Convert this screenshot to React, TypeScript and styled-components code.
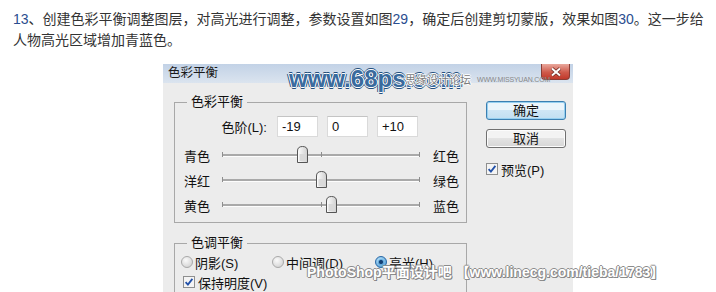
import React from "react";
import styled, { createGlobalStyle } from "styled-components";

const GlobalStyle = createGlobalStyle`
  html, body {
    margin: 0;
    padding: 0;
    background: #fff;
    overflow: hidden;
  }
`;

const Page = styled.div`
  position: relative;
  width: 716px;
  height: 292px;
  overflow: hidden;
  font-family: "Liberation Sans", "Noto Sans CJK SC", sans-serif;
`;

const Article = styled.p`
  margin: 0;
  padding: 9px 0 0 13px;
  font-size: 14px;
  line-height: 21px;
  color: #333;
`;

const Num = styled.span`
  color: #2a4d8f;
`;

const Dialog = styled.div`
  margin: 13px 0 0 163px;
  width: 410px;
  height: 240px;
  background: #ececec;
  display: flex;
  flex-direction: column;
  font-size: 13px;
  color: #111;
`;

const TitleBar = styled.div`
  height: 19px;
  display: flex;
  align-items: center;
  justify-content: space-between;
  background: linear-gradient(#c2d2e6, #dbe4ef);
`;

const Title = styled.span`
  padding-left: 5px;
  font-size: 12.5px;
  line-height: 15px;
  color: #1a1a1a;
`;

const CloseButton = styled.div`
  align-self: flex-start;
  width: 27px;
  height: 15px;
  margin-right: 3px;
  border: 1px solid #8a3d35;
  border-top: 0;
  border-radius: 0 0 4px 4px;
  background: linear-gradient(#e9a89d, #cf5a4b 55%, #c0392b);
  display: flex;
  align-items: center;
  justify-content: center;
`;

const Body = styled.div`
  flex: 1;
  display: flex;
  padding-left: 11px;
`;

const LeftColumn = styled.div`
  width: 293px;
  display: flex;
  flex-direction: column;
`;

const Group = styled.fieldset<{ $top: number }>`
  margin: ${({ $top }) => $top}px 0 0;
  padding: 0 0 4px;
  border: 1px solid #a8a8a8;
  min-inline-size: 0;
`;

const Legend = styled.legend`
  margin-left: 12px;
  padding: 0 4px;
  font-size: 13px;
  line-height: 16px;
`;

const LevelsRow = styled.div`
  display: flex;
  align-items: center;
  margin-top: 6px;
  height: 21px;
`;

const LevelsLabel = styled.span`
  width: 92px;
  margin-right: 10px;
  text-align: right;
`;

const LevelInputs = styled.div`
  display: flex;
  gap: 9px;
`;

const LevelInput = styled.div`
  box-sizing: border-box;
  width: 41px;
  height: 21px;
  padding-left: 4px;
  background: #fff;
  border: 1px solid #dadada;
  border-top-color: #c4c4c4;
  line-height: 19px;
`;

const Sliders = styled.div`
  margin-top: 6px;
`;

const SliderRow = styled.div`
  height: 25px;
  display: flex;
  align-items: center;
  padding-left: 9px;
`;

const SliderLabel = styled.span`
  width: 38px;
`;

const Track = styled.div`
  position: relative;
  width: 198px;
  height: 2px;
  background: #a9a9a9;
  border-bottom: 1px solid #fdfdfd;
  margin-right: 13px;
`;

const TrackTick = styled.span<{ $at: string }>`
  position: absolute;
  left: ${({ $at }) => $at};
  top: -2px;
  width: 1px;
  height: 5px;
  background: #8e8e8e;
`;

const Thumb = styled.svg`
  position: absolute;
  top: -8px;
  width: 11px;
  height: 17px;
  margin-left: -5px;
`;

const RadioRow = styled.div`
  margin-top: 1px;
  height: 20px;
  display: grid;
  grid-template-columns: 91px 103px auto;
  align-items: center;
  padding-left: 6px;
`;

const Option = styled.label`
  display: flex;
  align-items: center;
  gap: 2px;
`;

const CheckRow = styled.div<{ $pad: number; $top: number }>`
  height: 20px;
  display: flex;
  align-items: center;
  gap: 3px;
  padding-left: ${({ $pad }) => $pad}px;
  margin-top: ${({ $top }) => $top}px;
`;

const RightColumn = styled.div`
  margin-left: 19px;
  padding-top: 18px;
  display: flex;
  flex-direction: column;
`;

const DialogButton = styled.div<{ $primary?: boolean }>`
  box-sizing: border-box;
  width: 80px;
  height: 19px;
  margin-bottom: 9px;
  border: 1px solid ${({ $primary }) => ($primary ? "#3c7fb1" : "#707070")};
  border-radius: 3px;
  background: ${({ $primary }) =>
    $primary ? "linear-gradient(#ecf5fb 45%, #cfe6f5 50%, #c2dff2)" : "linear-gradient(#f3f3f3 45%, #e3e3e3 50%, #d6d6d6)"};
  box-shadow: inset 0 0 0 1px ${({ $primary }) => ($primary ? "#97d0f0" : "#fcfcfc")};
  text-align: center;
  line-height: 17px;
`;

const Mark = styled.div`
  position: absolute;
  white-space: nowrap;
  pointer-events: none;
`;

const SiteMark = styled(Mark)`
  left: 289px;
  top: 67px;
  font-family: "Liberation Sans", sans-serif;
  font-weight: bold;
  font-size: 24px;
  line-height: 24px;
  color: #3a6b9e;
  text-shadow: 1px 0 #fff, -1px 0 #fff, 0 1px #fff, 0 -1px #fff, 2px 0 #254f7c, -2px 0 #254f7c,
    0 2px #254f7c, 0 -2px #254f7c;
`;

const ForumMark = styled(Mark)`
  left: 405px;
  top: 73px;
  font-size: 11px;
  line-height: 14px;
  color: #7a7a7a;
  text-shadow: 1px 0 #fff, -1px 0 #fff, 0 1px #fff, 0 -1px #fff;
  display: flex;
  align-items: center;
  gap: 6px;
`;

const ForumUrl = styled.span`
  font-size: 7px;
  letter-spacing: -0.2px;
  color: #888;
  text-shadow: none;
`;

const FooterMark = styled(Mark)`
  left: 307px;
  top: 264px;
  font-family: "Liberation Sans", "Noto Sans CJK SC", sans-serif;
  font-weight: bold;
  font-size: 14px;
  line-height: 16px;
  color: #fff;
  text-shadow: 1px 0 #8c8c8c, -1px 0 #8c8c8c, 0 1px #8c8c8c, 0 -1px #8c8c8c, 1px 1px #7a7a7a;
`;

const Radio = ({ checked }: { checked?: boolean }) => (
  <svg width="12" height="12" viewBox="0 0 12 12">
    <defs>
      <radialGradient id={checked ? "rg-on" : "rg-off"} cx="40%" cy="35%" r="70%">
        <stop offset="0" stopColor={checked ? "#bfe6fb" : "#fafafa"} />
        <stop offset="1" stopColor={checked ? "#4d9bd6" : "#d2d2d2"} />
      </radialGradient>
    </defs>
    <circle cx="6" cy="6" r="5.5" fill={`url(#${checked ? "rg-on" : "rg-off"})`} stroke={checked ? "#2d6aa6" : "#a9a9a9"} />
    {checked && <circle cx="6" cy="6" r="2.6" fill="#123f73" stroke="#6fb8e8" strokeWidth="0.8" />}
  </svg>
);

const CheckBox = () => (
  <svg width="12" height="12" viewBox="0 0 12 12">
    <rect x="0.5" y="0.5" width="11" height="11" fill="#f4f4f4" stroke="#8e8f8f" />
    <path d="M2.6 6.2 L4.9 8.6 L9.4 2.9" fill="none" stroke="#2150a8" strokeWidth="1.8" />
  </svg>
);

const SliderThumb = ({ value }: { value: number }) => (
  <Thumb viewBox="0 0 11 17" style={{ left: `${((value + 100) / 200) * 100}%` }}>
    <defs>
      <linearGradient id="thumb" x1="0" y1="0" x2="1" y2="0">
        <stop offset="0" stopColor="#ffffff" />
        <stop offset="1" stopColor="#cfcfcf" />
      </linearGradient>
    </defs>
    <path d="M0.5 16.5 V5 Q0.5 0.5 5.5 0.5 Q10.5 0.5 10.5 5 V16.5 Z" fill="url(#thumb)" stroke="#555" />
    <rect x="2.5" y="8" width="6" height="7" fill="#d9d9d9" />
  </Thumb>
);

const sliders = [
  { left: "青色", right: "红色", value: -19 },
  { left: "洋红", right: "绿色", value: 0 },
  { left: "黄色", right: "蓝色", value: 10 },
];

const levels = ["-19", "0", "+10"];

export default function App() {
  return (
    <Page>
      <GlobalStyle />
      <Article>
        <Num>13</Num>、创建色彩平衡调整图层，对高光进行调整，参数设置如图<Num>29</Num>，确定后创建剪切蒙版，效果如图
        <Num>30</Num>。这一步给人物高光区域增加青蓝色。
      </Article>

      <Dialog>
        <TitleBar>
          <Title>色彩平衡</Title>
          <CloseButton>
            <svg width="12" height="10" viewBox="0 0 12 10">
              <path d="M2 1.5 L10 8.5 M10 1.5 L2 8.5" stroke="#6e2a22" strokeWidth="3.6" />
              <path d="M2 1.5 L10 8.5 M10 1.5 L2 8.5" stroke="#fff" strokeWidth="2" />
            </svg>
          </CloseButton>
        </TitleBar>

        <Body>
          <LeftColumn>
            <Group $top={11}>
              <Legend>色彩平衡</Legend>
              <LevelsRow>
                <LevelsLabel>色阶(L):</LevelsLabel>
                <LevelInputs>
                  {levels.map((v) => (
                    <LevelInput key={v}>{v}</LevelInput>
                  ))}
                </LevelInputs>
              </LevelsRow>
              <Sliders>
                {sliders.map((s) => (
                  <SliderRow key={s.left}>
                    <SliderLabel>{s.left}</SliderLabel>
                    <Track>
                      <TrackTick $at="0" />
                      <TrackTick $at="50%" />
                      <TrackTick $at="calc(100% - 1px)" />
                      <SliderThumb value={s.value} />
                    </Track>
                    <span>{s.right}</span>
                  </SliderRow>
                ))}
              </Sliders>
            </Group>

            <Group $top={12}>
              <Legend>色调平衡</Legend>
              <RadioRow>
                <Option>
                  <Radio />
                  阴影(S)
                </Option>
                <Option>
                  <Radio />
                  中间调(D)
                </Option>
                <Option>
                  <Radio checked />
                  高光(H)
                </Option>
              </RadioRow>
              <CheckRow $pad={8} $top={0}>
                <CheckBox />
                保持明度(V)
              </CheckRow>
            </Group>
          </LeftColumn>

          <RightColumn>
            <DialogButton $primary>确定</DialogButton>
            <DialogButton>取消</DialogButton>
            <CheckRow $pad={0} $top={2}>
              <CheckBox />
              预览(P)
            </CheckRow>
          </RightColumn>
        </Body>
      </Dialog>

      <SiteMark>www.68ps.com</SiteMark>
      <ForumMark>
        思缘设计论坛
        <ForumUrl>WWW.MISSYUAN.COM</ForumUrl>
      </ForumMark>
      <FooterMark>PhotoShop平面设计吧 【www.linecg.com/tieba/1783】</FooterMark>
    </Page>
  );
}
